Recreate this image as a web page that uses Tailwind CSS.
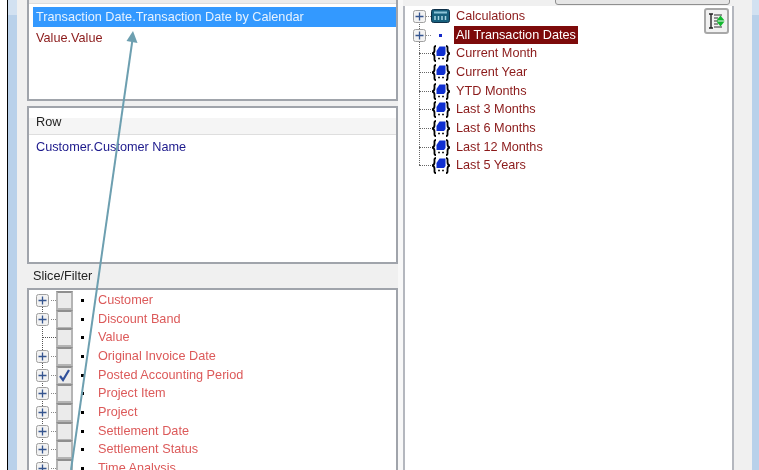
<!DOCTYPE html>
<html lang="en">
<head>
<meta charset="UTF-8" />
<title>Pivot designer</title>
<script src="https://cdn.jsdelivr.net/npm/@tailwindcss/browser@4"></script>
</head>
<body class="bg-white overflow-hidden">
<svg width="0" height="0" class="absolute">
  <defs>
    <g id="plus">
      <rect x="0.5" y="0.5" width="12" height="12" rx="2" fill="#f2f2f2" stroke="#a0a0a0"/>
      <path d="M2.5 6.5h8M6.5 2.5v8" stroke="#35558f" stroke-width="1.3"/>
    </g>
    <g id="brace">
      <path d="M5 1C3 1 3.500 3 3.500 5S3.500 8 1.200 8.500C3.500 9 3.500 10 3.500 12S3 16 5 16M15 1C17 1 16.500 3 16.500 5S16.500 8 18.800 8.500C16.500 9 16.500 10 16.500 12S17 16 15 16" fill="none" stroke="#000" stroke-width="1.800"/>
      <path d="M5.500 6L8.500 1.500H14.500V9L13 11H5.500Z" fill="#0f2fd0"/>
      <path d="M7 13.500h2M11 13.500h2" stroke="#222" stroke-width="1.600"/>
    </g>
  </defs>
</svg>

<div class="relative w-[759px] h-[470px] overflow-hidden flex font-['Liberation_Sans',Arial,sans-serif] text-[12.7px] blur-[0.35px]">
  <!-- window frame left -->
  <div class="w-[7px] shrink-0 bg-white"></div>
  <div class="w-px shrink-0 bg-black"></div>
  <div class="w-[9px] shrink-0 bg-[#b9d1ea]"><div class="h-[15px] bg-[#d2e1f1]"></div></div>

  <div class="w-[735px] shrink-0 bg-[#f0f0f0] flex">
    <!-- left column -->
    <div class="ml-[10px] w-[371px] shrink-0 flex flex-col">
      <div class="h-[102px] shrink-0 mt-[-1px] bg-white border-2 border-t-0 border-[#a0a4ab] flex flex-col">
        <div class="h-[5px] bg-[#ececec] border-b border-[#dcdcdc]"></div>
        <div class="ml-[4px] mt-[3px] h-[20px] bg-[#3399ff] text-[#e6f2ff] pl-[3px] leading-[20px]">Transaction Date.Transaction Date by Calendar</div>
        <div class="pl-[7px] mt-[2px] leading-[19px] text-[#8b1a1a]">Value.Value</div>
      </div>

      <div class="h-[158px] shrink-0 mt-[5px] bg-white border-2 border-[#a0a4ab] flex flex-col">
        <div class="h-[17px] mt-[10px] bg-[#f5f5f5] border-b border-[#dedede] pl-[7px] leading-[8px] text-[#222]">Row</div>
        <div class="pl-[7px] mt-[3px] leading-[18px] text-[#1d1a8c]">Customer.Customer Name</div>
      </div>

      <div class="h-[24px] shrink-0 pl-[6px] leading-[24px] text-[#222]">Slice/Filter</div>

      <div class="flex-1 bg-white border-2 border-b-0 border-[#a0a4ab] pt-[1px] text-[#dc5a5a] relative">
        <div class="absolute left-[13px] top-[8px] bottom-0 border-l border-dotted border-[#555]"></div>
        <div class="flex items-center h-[18.700px]"><svg class="ml-[7px] relative" width="13" height="13"><use href="#plus"/></svg><span class="ml-[2px] w-[5px] border-t border-dotted border-[#888]"></span><span class="w-[17px] h-[19px] bg-[#ebebeb] border-2 border-[#b4b4b4] border-t-[#8f8f8f]"></span><span class="ml-[8px] w-[3px] h-[3px] bg-black"></span><span class="ml-[14px]">Customer</span></div>
        <div class="flex items-center h-[18.700px]"><svg class="ml-[7px] relative" width="13" height="13"><use href="#plus"/></svg><span class="ml-[2px] w-[5px] border-t border-dotted border-[#888]"></span><span class="w-[17px] h-[19px] bg-[#ebebeb] border-2 border-[#b4b4b4] border-t-[#8f8f8f]"></span><span class="ml-[8px] w-[3px] h-[3px] bg-black"></span><span class="ml-[14px]">Discount Band</span></div>
        <div class="flex items-center h-[18.700px]"><span class="ml-[13px] w-[14px] border-t border-dotted border-[#555]"></span><span class="w-[17px] h-[19px] bg-[#ebebeb] border-2 border-[#b4b4b4] border-t-[#8f8f8f]"></span><span class="ml-[8px] w-[3px] h-[3px] bg-black"></span><span class="ml-[14px]">Value</span></div>
        <div class="flex items-center h-[18.700px]"><svg class="ml-[7px] relative" width="13" height="13"><use href="#plus"/></svg><span class="ml-[2px] w-[5px] border-t border-dotted border-[#888]"></span><span class="w-[17px] h-[19px] bg-[#ebebeb] border-2 border-[#b4b4b4] border-t-[#8f8f8f]"></span><span class="ml-[8px] w-[3px] h-[3px] bg-black"></span><span class="ml-[14px]">Original Invoice Date</span></div>
        <div class="flex items-center h-[18.700px]"><svg class="ml-[7px] relative" width="13" height="13"><use href="#plus"/></svg><span class="ml-[2px] w-[5px] border-t border-dotted border-[#888]"></span><span class="w-[17px] h-[19px] bg-[#ebebeb] border-2 border-[#b4b4b4] border-t-[#8f8f8f] flex items-center justify-center"><svg width="13" height="13" viewBox="0 0 13 13"><path d="M2 7L5 11L11 1" fill="none" stroke="#2f4f9a" stroke-width="2.200"/></svg></span><span class="ml-[8px] w-[3px] h-[3px] bg-black"></span><span class="ml-[14px]">Posted Accounting Period</span></div>
        <div class="flex items-center h-[18.700px]"><svg class="ml-[7px] relative" width="13" height="13"><use href="#plus"/></svg><span class="ml-[2px] w-[5px] border-t border-dotted border-[#888]"></span><span class="w-[17px] h-[19px] bg-[#ebebeb] border-2 border-[#b4b4b4] border-t-[#8f8f8f]"></span><span class="ml-[8px] w-[3px] h-[3px] bg-black"></span><span class="ml-[14px]">Project Item</span></div>
        <div class="flex items-center h-[18.700px]"><svg class="ml-[7px] relative" width="13" height="13"><use href="#plus"/></svg><span class="ml-[2px] w-[5px] border-t border-dotted border-[#888]"></span><span class="w-[17px] h-[19px] bg-[#ebebeb] border-2 border-[#b4b4b4] border-t-[#8f8f8f]"></span><span class="ml-[8px] w-[3px] h-[3px] bg-black"></span><span class="ml-[14px]">Project</span></div>
        <div class="flex items-center h-[18.700px]"><svg class="ml-[7px] relative" width="13" height="13"><use href="#plus"/></svg><span class="ml-[2px] w-[5px] border-t border-dotted border-[#888]"></span><span class="w-[17px] h-[19px] bg-[#ebebeb] border-2 border-[#b4b4b4] border-t-[#8f8f8f]"></span><span class="ml-[8px] w-[3px] h-[3px] bg-black"></span><span class="ml-[14px]">Settlement Date</span></div>
        <div class="flex items-center h-[18.700px]"><svg class="ml-[7px] relative" width="13" height="13"><use href="#plus"/></svg><span class="ml-[2px] w-[5px] border-t border-dotted border-[#888]"></span><span class="w-[17px] h-[19px] bg-[#ebebeb] border-2 border-[#b4b4b4] border-t-[#8f8f8f]"></span><span class="ml-[8px] w-[3px] h-[3px] bg-black"></span><span class="ml-[14px]">Settlement Status</span></div>
        <div class="flex items-center h-[18.700px]"><svg class="ml-[7px] relative" width="13" height="13"><use href="#plus"/></svg><span class="ml-[2px] w-[5px] border-t border-dotted border-[#888]"></span><span class="w-[17px] h-[19px] bg-[#ebebeb] border-2 border-[#b4b4b4] border-t-[#8f8f8f]"></span><span class="ml-[8px] w-[3px] h-[3px] bg-black"></span><span class="ml-[14px]">Time Analysis</span></div>
      </div>
    </div>

    <!-- splitter -->
    <div class="w-[5px] shrink-0 bg-[#f8f8f8]"></div>

    <!-- right column -->
    <div class="w-[331px] shrink-0 relative flex flex-col">
      <div class="h-[6px] shrink-0 relative">
        <div class="absolute left-[152px] w-[175px] top-[-6px] h-[11px] rounded-b-[3px] bg-[#e6e6e6] border border-[#8f8f8f]"></div>
      </div>
      <div class="flex-1 bg-white border-x-2 border-[#b4b7be] pl-[8px] text-[#8b1a1a] relative">
        <div class="absolute left-[14px] top-[16px] h-[143px] border-l border-dotted border-[#666]"></div>
        <div class="flex items-center h-[18.700px] mt-[1px]"><svg class="relative" width="13" height="13"><use href="#plus"/></svg><span class="w-[5px] border-t border-dotted border-[#888]"></span><svg width="19" height="14" viewBox="0 0 19 14"><rect x="0.500" y="0.500" width="18" height="13" rx="2" fill="#17607d" stroke="#0f3048"/><rect x="3" y="2.500" width="13" height="2" fill="#8cc4d8"/><path d="M4 7v4M7.500 7v4M11 7v4M14.500 7v4" stroke="#a9d6e4" stroke-width="1.500"/></svg><span class="ml-[6px]">Calculations</span></div>
        <div class="flex items-center h-[18.700px]"><svg class="relative" width="13" height="13"><use href="#plus"/></svg><span class="w-[5px] border-t border-dotted border-[#888]"></span><span class="ml-[8px] w-[3px] h-[3px] bg-[#1428c8]"></span><span class="ml-[12px] h-[18px] leading-[18px] px-[2px] bg-[#7d0a0a] text-white">All Transaction Dates</span></div>
        <div class="flex items-center h-[18.700px]"><span class="ml-[6px] w-[12px] border-t border-dotted border-[#666]"></span><svg width="20" height="17"><use href="#brace"/></svg><span class="ml-[5px]">Current Month</span></div>
        <div class="flex items-center h-[18.700px]"><span class="ml-[6px] w-[12px] border-t border-dotted border-[#666]"></span><svg width="20" height="17"><use href="#brace"/></svg><span class="ml-[5px]">Current Year</span></div>
        <div class="flex items-center h-[18.700px]"><span class="ml-[6px] w-[12px] border-t border-dotted border-[#666]"></span><svg width="20" height="17"><use href="#brace"/></svg><span class="ml-[5px]">YTD Months</span></div>
        <div class="flex items-center h-[18.700px]"><span class="ml-[6px] w-[12px] border-t border-dotted border-[#666]"></span><svg width="20" height="17"><use href="#brace"/></svg><span class="ml-[5px]">Last 3 Months</span></div>
        <div class="flex items-center h-[18.700px]"><span class="ml-[6px] w-[12px] border-t border-dotted border-[#666]"></span><svg width="20" height="17"><use href="#brace"/></svg><span class="ml-[5px]">Last 6 Months</span></div>
        <div class="flex items-center h-[18.700px]"><span class="ml-[6px] w-[12px] border-t border-dotted border-[#666]"></span><svg width="20" height="17"><use href="#brace"/></svg><span class="ml-[5px]">Last 12 Months</span></div>
        <div class="flex items-center h-[18.700px]"><span class="ml-[6px] w-[12px] border-t border-dotted border-[#666]"></span><svg width="20" height="17"><use href="#brace"/></svg><span class="ml-[5px]">Last 5 Years</span></div>

        <div class="absolute right-[3px] top-[2px] w-[25px] h-[26px] rounded-[3px] bg-[#f1f1f1] border-2 border-[#a8a8a8] flex items-center justify-center">
          <svg width="18" height="18" viewBox="0 0 18 18"><path d="M1 2h4M3 2v14M1 16h4" stroke="#222" stroke-width="1.400" fill="none"/><path d="M6 3h8M6 6h4M6 9h4M6 12h4M6 15h8" stroke="#333" stroke-width="1.200" fill="none"/><path d="M12.500 3.500L16.500 8.500H8.500Z" fill="#12b82e"/><path d="M12.500 14.500L16.500 9.500H8.500Z" fill="#12b82e"/></svg>
        </div>
      </div>
    </div>

    <div class="flex-1"></div>
  </div>

  <!-- window frame right -->
  <div class="w-[9px] shrink-0 bg-[#b9d1ea]"><div class="h-[15px] bg-[#d2e1f1]"></div></div>
  <div class="w-px shrink-0 bg-black"></div>
  <div class="flex-1 bg-white"></div>

  <!-- annotation arrow -->
  <svg class="absolute left-0 top-0" width="759" height="470">
    <path d="M133 36L71 470" stroke="#6d9fb0" stroke-width="2" fill="none"/>
    <path d="M133 31L137.500 43L126.500 41Z" fill="#6d9fb0"/>
  </svg>
</div>
</body>
</html>
